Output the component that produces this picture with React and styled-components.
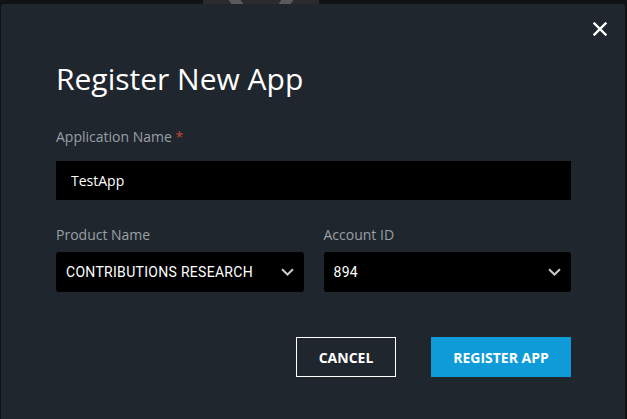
import React from "react";
import styled, { createGlobalStyle } from "styled-components";

const GlobalStyle = createGlobalStyle`
  html, body {
    margin: 0;
    padding: 0;
    background: #111213;
    overflow: hidden;
  }
  * {
    box-sizing: border-box;
  }
`;

function Chevron() {
  return (
    <svg width="13" height="8" viewBox="0 0 13 8" fill="none">
      <path d="M1 1.2 L6.5 6.5 L12 1.2" stroke="#c8ccd0" strokeWidth="2" />
    </svg>
  );
}

function CloseIcon() {
  return (
    <svg width="14" height="14" viewBox="0 0 14 14">
      <path d="M1.5 1.5 L12.5 12.5 M12.5 1.5 L1.5 12.5" stroke="#fff" strokeWidth="2.4" strokeLinecap="square" />
    </svg>
  );
}

export default function App() {
  return (
    <>
      <GlobalStyle />
      <Page>
        <Behind />
        <Modal>
          <CloseButton aria-label="close">
            <CloseIcon />
          </CloseButton>
          <Title>Register New App</Title>

          <Field>
            <Label $gap={15}>
              Application Name <Required>*</Required>
            </Label>
            <TextInput defaultValue="TestApp" />
          </Field>

          <Row>
            <Field>
              <Label $gap={8}>Product Name</Label>
              <Select>
                <span>CONTRIBUTIONS RESEARCH</span>
                <Chevron />
              </Select>
            </Field>
            <Field>
              <Label $gap={8}>Account ID</Label>
              <Select>
                <span>894</span>
                <Chevron />
              </Select>
            </Field>
          </Row>

          <Actions>
            <Button>CANCEL</Button>
            <Button $primary>REGISTER APP</Button>
          </Actions>
        </Modal>
      </Page>
    </>
  );
}

const Page = styled.div`
  position: relative;
  width: 627px;
  height: 419px;
  padding: 4px 2px 0 1px;
`;

const Behind = styled.div`
  position: absolute;
  top: 0;
  left: 203px;
  width: 116px;
  height: 4px;
  background: #2b2b2c;
  &::before,
  &::after {
    content: "";
    position: absolute;
    top: 0;
    width: 12px;
    height: 4px;
    background: #5a5a5c;
  }
  &::before {
    left: 27px;
    transform: skewX(35deg);
  }
  &::after {
    left: 77px;
    transform: skewX(-35deg);
  }
`;

const Modal = styled.div`
  position: relative;
  height: 100%;
  background: #1f262e;
  border-radius: 3px 3px 0 0;
  padding: 57px 54px 0 55px;
  font-family: "Open Sans", Lato, sans-serif;
`;

const CloseButton = styled.button`
  position: absolute;
  top: 18px;
  right: 18px;
  background: none;
  border: none;
  padding: 0;
  cursor: pointer;
  display: flex;
`;

const Title = styled.h1`
  margin: 0 0 31px;
  font-size: 30px;
  font-weight: 400;
  line-height: 36px;
  color: #fff;
`;

const Field = styled.div`
  display: flex;
  flex-direction: column;
  flex: 1;
  min-width: 0;
  margin-bottom: 26px;
`;

const Label = styled.label`
  font-size: 14px;
  line-height: 18px;
  color: #9aa0a5;
  margin-bottom: ${(p) => p.$gap}px;
`;

const Required = styled.span`
  color: #c5452f;
`;

const TextInput = styled.input`
  height: 39px;
  background: #000;
  border: none;
  border-radius: 0;
  outline: none;
  padding: 0 15px;
  color: #fff;
  font-family: "Open Sans", Lato, sans-serif;
  font-size: 14px;
`;

const Row = styled.div`
  display: flex;
  gap: 20px;
`;

const Select = styled.div`
  height: 40px;
  background: #000;
  border-radius: 3px;
  display: flex;
  align-items: center;
  justify-content: space-between;
  padding: 0 10px 0 10px;
  color: #fff;
  font-family: Roboto, "Liberation Sans", sans-serif;
  font-size: 14px;
  letter-spacing: 0.3px;
`;

const Actions = styled.div`
  display: flex;
  justify-content: flex-end;
  gap: 35px;
  margin-top: 19px;
`;

const Button = styled.button`
  height: 40px;
  width: ${(p) => (p.$primary ? "140px" : "100px")};
  background: ${(p) => (p.$primary ? "#0f9bd7" : "transparent")};
  border: ${(p) => (p.$primary ? "none" : "1px solid #fff")};
  color: #fff;
  font-family: "Open Sans", Lato, sans-serif;
  font-weight: 700;
  font-size: 14px;
  cursor: pointer;
`;
